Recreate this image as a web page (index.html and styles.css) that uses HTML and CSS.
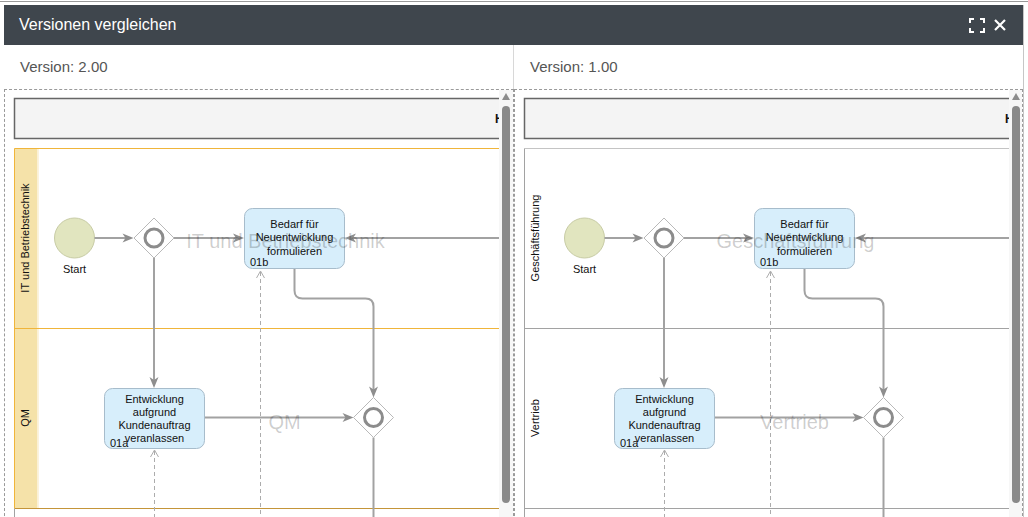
FILE: index.html
```html
<!DOCTYPE html>
<html lang="de">
<head>
<meta charset="utf-8">
<title>Versionen vergleichen</title>
<link rel="stylesheet" href="styles.css">
</head>
<body>
<div class="backdrop-line"></div>
<div class="dialog">
  <header class="dlg-head">
    <h1 class="dlg-title">Versionen vergleichen</h1>
    <div class="dlg-tools">
      <svg class="ico-expand" width="16" height="15" viewBox="0 0 16 15"><path d="M1,5 V1 H5 M11,1 H15 V5 M15,10 V14 H11 M5,14 H1 V10" fill="none" stroke="#fff" stroke-width="2"/></svg>
      <svg class="ico-close" width="12" height="12" viewBox="0 0 12 12"><path d="M1,1 L11,11 M11,1 L1,11" fill="none" stroke="#fff" stroke-width="2.2"/></svg>
    </div>
  </header>
  <div class="dlg-body">
    <section class="pane pane-left">
      <div class="ver">Version: 2.00</div>
      <div class="viewport">
        <svg class="canvas" width="494" height="430" viewBox="0 0 494 430">
          <rect class="pool" x="9.5" y="8.5" width="520" height="40"/>
          <text class="pool-h" x="490" y="32.5">H</text>

          <rect class="lanecol-hl" x="9.5" y="58.5" width="23" height="360"/>
          <rect class="lanecol-strip" x="32.5" y="59" width="1.3" height="359"/>
          <line class="lane-hl" x1="9.5" y1="58.5" x2="520" y2="58.5"/>
          <line class="lane-hl" x1="9.5" y1="238.5" x2="520" y2="238.5"/>
          <line class="lane-hl2" x1="9.5" y1="418.5" x2="520" y2="418.5"/>
          <line class="lane-hl" x1="9.5" y1="58.5" x2="9.5" y2="418.5"/>
          <line class="lane-grey" x1="9.5" y1="418.5" x2="9.5" y2="440"/>
          <text class="lane-label" transform="translate(20,148) rotate(-90)" y="4">IT und Betriebstechnik</text>
          <text class="lane-label" transform="translate(20,328) rotate(-90)" y="4">QM</text>

          <line class="dash" x1="255.5" y1="182" x2="255.5" y2="440"/>
          <path class="chev" d="M251.5,188 L255.5,181 L259.5,188"/>
          <line class="dash" x1="149.5" y1="361" x2="149.5" y2="440"/>
          <path class="chev" d="M145.5,367 L149.5,360 L153.5,367"/>

          <circle class="start" cx="69.5" cy="148" r="20"/>
          <text class="lbl" x="69.5" y="183">Start</text>

          <line class="flow" x1="89.5" y1="148" x2="122" y2="148"/>
          <path class="ah" d="M128.5,148 L117.5,143.5 L120.5,148 L117.5,152.5 Z"/>
          <line class="flow" x1="169" y1="148" x2="232" y2="148"/>
          <path class="ah" d="M239,148 L228,143.5 L231,148 L228,152.5 Z"/>
          <line class="flow" x1="494" y1="148" x2="347" y2="148"/>
          <path class="ah" d="M340,148 L351,143.5 L348,148 L351,152.5 Z"/>
          <line class="flow" x1="149" y1="168" x2="149" y2="291"/>
          <path class="ah" d="M149,298 L144.5,287 L149,290 L153.5,287 Z"/>
          <path class="flow" d="M289.5,178.5 V200.5 Q289.5,208.5 297.5,208.5 H360.5 Q368.5,208.5 368.5,216.5 V300"/>
          <path class="ah" d="M368.5,307.5 L364,296.5 L368.5,299.5 L373,296.5 Z"/>
          <line class="flow" x1="199.5" y1="327.5" x2="341" y2="327.5"/>
          <path class="ah" d="M348.5,327.5 L337.5,323 L340.5,327.5 L337.5,332 Z"/>
          <line class="flow" x1="368.5" y1="347.5" x2="368.5" y2="440"/>

          <path class="gw" d="M149,128 L169,148 L149,168 L129,148 Z"/>
          <circle class="gwc" cx="149" cy="148" r="9"/>
          <path class="gw" d="M368.5,307.5 L388.5,327.5 L368.5,347.5 L348.5,327.5 Z"/>
          <circle class="gwc" cx="368.5" cy="327.5" r="9"/>

          <rect class="task" x="239.5" y="118.5" width="100" height="60" rx="8"/>
          <text class="ttxt" x="289.5" y="138">Bedarf für</text>
          <text class="ttxt" x="289.5" y="151.3">Neuentwicklung</text>
          <text class="ttxt" x="289.5" y="164.6">formulieren</text>
          <text class="tid" x="245" y="176">01b</text>

          <rect class="task" x="99.5" y="298.5" width="100" height="60" rx="8"/>
          <text class="ttxt" x="149.5" y="312.5">Entwicklung</text>
          <text class="ttxt" x="149.5" y="325.7">aufgrund</text>
          <text class="ttxt" x="149.5" y="338.9">Kundenauftrag</text>
          <text class="ttxt" x="149.5" y="352.1">veranlassen</text>
          <text class="tid" x="105" y="356.7">01a</text>

          <text class="wm" x="280.5" y="158">IT und Betriebstechnik</text>
          <text class="wm" x="279.5" y="339">QM</text>
        </svg>
        <div class="vscroll vscroll-left">
          <span class="vs-arrow"></span>
          <span class="vs-thumb"></span>
        </div>
      </div>
    </section>

    <section class="pane pane-right">
      <div class="ver">Version: 1.00</div>
      <div class="viewport">
        <svg class="canvas" width="494" height="430" viewBox="0 0 494 430">
          <rect class="pool" x="9.5" y="8.5" width="520" height="40"/>
          <text class="pool-h" x="490" y="32.5">H</text>

          <line class="lane-top" x1="9.5" y1="58.5" x2="520" y2="58.5"/>
          <line class="lane-grey" x1="9.5" y1="238.5" x2="520" y2="238.5"/>
          <line class="lane-grey" x1="9.5" y1="418.5" x2="520" y2="418.5"/>
          <line class="lane-grey" x1="9.5" y1="58.5" x2="9.5" y2="440"/>
          <text class="lane-label" transform="translate(20,148) rotate(-90)" y="4">Geschäftsführung</text>
          <text class="lane-label" transform="translate(20,328) rotate(-90)" y="4">Vertrieb</text>

          <line class="dash" x1="255.5" y1="182" x2="255.5" y2="440"/>
          <path class="chev" d="M251.5,188 L255.5,181 L259.5,188"/>
          <line class="dash" x1="149.5" y1="361" x2="149.5" y2="440"/>
          <path class="chev" d="M145.5,367 L149.5,360 L153.5,367"/>

          <circle class="start" cx="69.5" cy="148" r="20"/>
          <text class="lbl" x="69.5" y="183">Start</text>

          <line class="flow" x1="89.5" y1="148" x2="122" y2="148"/>
          <path class="ah" d="M128.5,148 L117.5,143.5 L120.5,148 L117.5,152.5 Z"/>
          <line class="flow" x1="169" y1="148" x2="232" y2="148"/>
          <path class="ah" d="M239,148 L228,143.5 L231,148 L228,152.5 Z"/>
          <line class="flow" x1="494" y1="148" x2="347" y2="148"/>
          <path class="ah" d="M340,148 L351,143.5 L348,148 L351,152.5 Z"/>
          <line class="flow" x1="149" y1="168" x2="149" y2="291"/>
          <path class="ah" d="M149,298 L144.5,287 L149,290 L153.5,287 Z"/>
          <path class="flow" d="M289.5,178.5 V200.5 Q289.5,208.5 297.5,208.5 H360.5 Q368.5,208.5 368.5,216.5 V300"/>
          <path class="ah" d="M368.5,307.5 L364,296.5 L368.5,299.5 L373,296.5 Z"/>
          <line class="flow" x1="199.5" y1="327.5" x2="341" y2="327.5"/>
          <path class="ah" d="M348.5,327.5 L337.5,323 L340.5,327.5 L337.5,332 Z"/>
          <line class="flow" x1="368.5" y1="347.5" x2="368.5" y2="440"/>

          <path class="gw" d="M149,128 L169,148 L149,168 L129,148 Z"/>
          <circle class="gwc" cx="149" cy="148" r="9"/>
          <path class="gw" d="M368.5,307.5 L388.5,327.5 L368.5,347.5 L348.5,327.5 Z"/>
          <circle class="gwc" cx="368.5" cy="327.5" r="9"/>

          <rect class="task" x="239.5" y="118.5" width="100" height="60" rx="8"/>
          <text class="ttxt" x="289.5" y="138">Bedarf für</text>
          <text class="ttxt" x="289.5" y="151.3">Neuentwicklung</text>
          <text class="ttxt" x="289.5" y="164.6">formulieren</text>
          <text class="tid" x="245" y="176">01b</text>

          <rect class="task" x="99.5" y="298.5" width="100" height="60" rx="8"/>
          <text class="ttxt" x="149.5" y="312.5">Entwicklung</text>
          <text class="ttxt" x="149.5" y="325.7">aufgrund</text>
          <text class="ttxt" x="149.5" y="338.9">Kundenauftrag</text>
          <text class="ttxt" x="149.5" y="352.1">veranlassen</text>
          <text class="tid" x="105" y="356.7">01a</text>

          <text class="wm" x="280.5" y="158">Geschäftsführung</text>
          <text class="wm" x="279.5" y="339">Vertrieb</text>
        </svg>
        <div class="vscroll vscroll-right">
          <span class="vs-arrow"></span>
          <span class="vs-thumb"></span>
        </div>
      </div>
    </section>
  </div>
</div>
</body>
</html>
```

FILE: styles.css
```css
html, body {
  margin: 0;
  padding: 0;
  background: #ffffff;
  font-family: "Liberation Sans", Arial, sans-serif;
  overflow: hidden;
}

.backdrop-line {
  height: 1px;
  margin-top: 1px;
  background: #9a9a9a;
}

.dialog {
  margin: 3px 0 0 4px;
  width: 1019px;
  border-right: 1px solid #c6c6c6;
  background: #ffffff;
}

.dlg-head {
  height: 40px;
  background: #3f464d;
  display: flex;
  align-items: center;
  justify-content: space-between;
  padding: 0 17px 0 15px;
}

.dlg-title {
  margin: 0;
  font-size: 16px;
  font-weight: normal;
  color: #ffffff;
  line-height: 40px;
}

.dlg-tools {
  display: flex;
  align-items: center;
  gap: 9px;
}

.dlg-tools svg {
  display: block;
}

.dlg-body {
  display: grid;
  grid-template-columns: 510px 509px;
}

.pane {
  display: flex;
  flex-direction: column;
}

.ver {
  height: 44px;
  line-height: 44px;
  padding-left: 16px;
  font-size: 15px;
  color: #555555;
}

.pane-left .ver {
  border-right: 1px solid #d8d8d8;
}

.viewport {
  display: flex;
  height: 440px;
  border: 1px dashed #9a9a9a;
  overflow: hidden;
}

.canvas {
  display: block;
  flex: none;
  font-family: "Liberation Sans", Arial, sans-serif;
}

.vscroll {
  flex: none;
  display: flex;
  flex-direction: column;
  background: #f7f7f7;
  padding-top: 3px;
}

.vscroll-left { width: 14px; }
.vscroll-right { width: 13px; }

.vs-arrow {
  display: block;
  width: 0;
  height: 0;
  margin-left: 3px;
  border-left: 4.5px solid transparent;
  border-right: 4.5px solid transparent;
  border-bottom: 7px solid #8c8c8c;
}

.vs-thumb {
  display: block;
  width: 8px;
  height: 397px;
  margin: 6px 0 0 3px;
  background: #8a8a8a;
  border-radius: 4px;
}

/* diagram */
.pool {
  fill: #f4f4f4;
  stroke: #666666;
  stroke-width: 1.5;
}

.pool-h {
  font-size: 12px;
  font-weight: bold;
  fill: #111111;
}

.lanecol-hl { fill: #f5e2a9; }
.lanecol-strip { fill: #fbf1d6; }

.lane-hl { stroke: #f0b53a; stroke-width: 1; }
.lane-hl2 { stroke: #c49539; stroke-width: 1; }
.lane-grey { stroke: #a2a2a2; stroke-width: 1; }
.lane-top { stroke: #c4c4c4; stroke-width: 1; }

.lane-label {
  font-size: 11px;
  fill: #111111;
  text-anchor: middle;
}

.start {
  fill: #e1e5bf;
  stroke: #c8cca6;
  stroke-width: 1;
}

.lbl {
  font-size: 11px;
  fill: #111111;
  text-anchor: middle;
}

.flow {
  fill: none;
  stroke: #a2a2a2;
  stroke-width: 2;
}

.ah { fill: #8e8e8e; }

.dash {
  stroke: #acacac;
  stroke-width: 1;
  stroke-dasharray: 4 3;
}

.chev {
  fill: none;
  stroke: #acacac;
  stroke-width: 1;
}

.gw {
  fill: #ffffff;
  stroke: #b9b9b9;
  stroke-width: 1;
}

.gwc {
  fill: none;
  stroke: #8c8c8c;
  stroke-width: 3;
}

.task {
  fill: #d7eefb;
  stroke: #a7bccb;
  stroke-width: 1;
}

.ttxt {
  font-size: 11px;
  fill: #111111;
  text-anchor: middle;
}

.tid {
  font-size: 11px;
  fill: #111111;
}

.wm {
  font-size: 20px;
  fill: #000000;
  fill-opacity: 0.2;
  text-anchor: middle;
}
```
